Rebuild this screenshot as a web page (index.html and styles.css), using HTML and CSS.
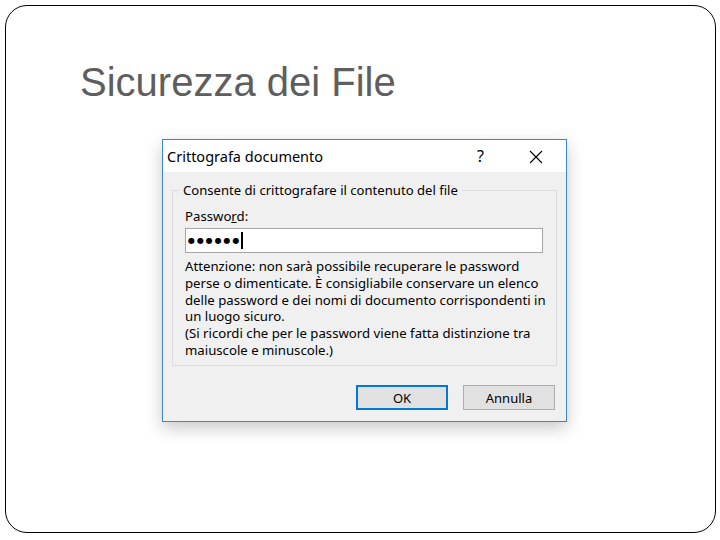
FILE: index.html
```html
<!DOCTYPE html>
<html lang="it">
<head>
<meta charset="utf-8">
<title>Sicurezza dei File</title>
<link rel="stylesheet" href="styles.css">
</head>
<body>
<div class="slide">
  <h1 class="slide-title">Sicurezza dei File</h1>
  <div class="dialog">
    <div class="titlebar">
      <span class="titlebar-text">Crittografa documento</span>
      <span class="titlebar-help">?</span>
      <span class="titlebar-close">
        <svg width="14" height="14" viewBox="0 0 14 14"><path d="M1 1 L13 13 M13 1 L1 13" stroke="#000" stroke-width="1.1" fill="none"/></svg>
      </span>
    </div>
    <div class="dialog-body">
      <fieldset class="group">
        <legend class="group-legend">Consente di crittografare il contenuto del file</legend>
        <div class="field-label">Passwo<u>r</u>d:</div>
        <div class="field-input"><span class="dots">●●●●●●</span><span class="caret"></span></div>
        <p class="warning">Attenzione: non sarà possibile recuperare le password<br>perse o dimenticate. È consigliabile conservare un elenco<br>delle password e dei nomi di documento corrispondenti in<br>un luogo sicuro.<br>(Si ricordi che per le password viene fatta distinzione tra<br>maiuscole e minuscole.)</p>
      </fieldset>
      <div class="buttons">
        <button class="btn btn-default">OK</button>
        <button class="btn">Annulla</button>
      </div>
    </div>
  </div>
</div>
</body>
</html>
```
FILE: styles.css
```css
html, body {
  margin: 0;
  padding: 0;
  background: #ffffff;
}
.slide {
  box-sizing: border-box;
  margin: 5px 0 0 5px;
  width: 711px;
  height: 528px;
  border: 1px solid #000;
  border-radius: 22px;
  padding: 56px 0 0 74px;
}
.slide-title {
  margin: 0;
  font-family: "Liberation Sans", Arial, sans-serif;
  font-weight: normal;
  font-size: 40px;
  line-height: 40px;
  color: #5e5e5e;
}
.dialog {
  box-sizing: border-box;
  margin: 37px 0 0 82px;
  width: 405px;
  height: 283px;
  border: 1px solid #3f86c8;
  background: #f0f0f0;
  box-shadow: 0 6px 16px rgba(0, 0, 0, 0.22);
  font-family: "Noto Sans", "DejaVu Sans", sans-serif;
  color: #000;
  display: flex;
  flex-direction: column;
}
.titlebar {
  height: 32px;
  background: #ffffff;
  display: flex;
  align-items: center;
  padding-left: 4px;
}
.titlebar-text {
  flex: 1;
  font-size: 14.5px;
}
.titlebar-help {
  font-size: 16px;
  width: 52px;
}
.titlebar-close {
  width: 37px;
  display: flex;
  padding-top: 1px;
}
.dialog-body {
  flex: 1;
  padding: 10px 9px 0 9px;
  display: flex;
  flex-direction: column;
}
.group {
  margin: 0;
  padding: 0 13px 0 12px;
  height: 184px;
  box-sizing: border-box;
  border: 1px solid #dcdcdc;
  min-width: 0;
}
.group-legend {
  font-size: 13.1px;
  padding: 0 4px 0 3px;
  margin-left: -5px;
  line-height: 17px;
}
.field-label {
  font-size: 13.2px;
  line-height: 17px;
  margin-top: 9px;
}
.field-input {
  box-sizing: border-box;
  margin-top: 3px;
  height: 25px;
  background: #fff;
  border: 1px solid #a6a6a6;
  display: flex;
  align-items: center;
  padding-left: 2px;
}
.dots {
  font-family: "DejaVu Sans", sans-serif;
  font-size: 8px;
  letter-spacing: 1.9px;
}
.caret {
  width: 2px;
  height: 17px;
  background: #000;
  margin-left: 0;
}
.warning {
  margin: 5px 0 0 0;
  font-size: 13.2px;
  line-height: 16.8px;
  white-space: nowrap;
}
.buttons {
  display: flex;
  justify-content: flex-end;
  gap: 15px;
  margin-top: 19px;
  padding-right: 2px;
}
.btn {
  box-sizing: border-box;
  width: 92px;
  height: 25px;
  background: #e1e1e1;
  border: 1px solid #adadad;
  font-family: "Noto Sans", "DejaVu Sans", sans-serif;
  font-size: 13px;
  color: #000;
  padding: 0;
}
.btn-default {
  border: 2px solid #0078d7;
}
```
